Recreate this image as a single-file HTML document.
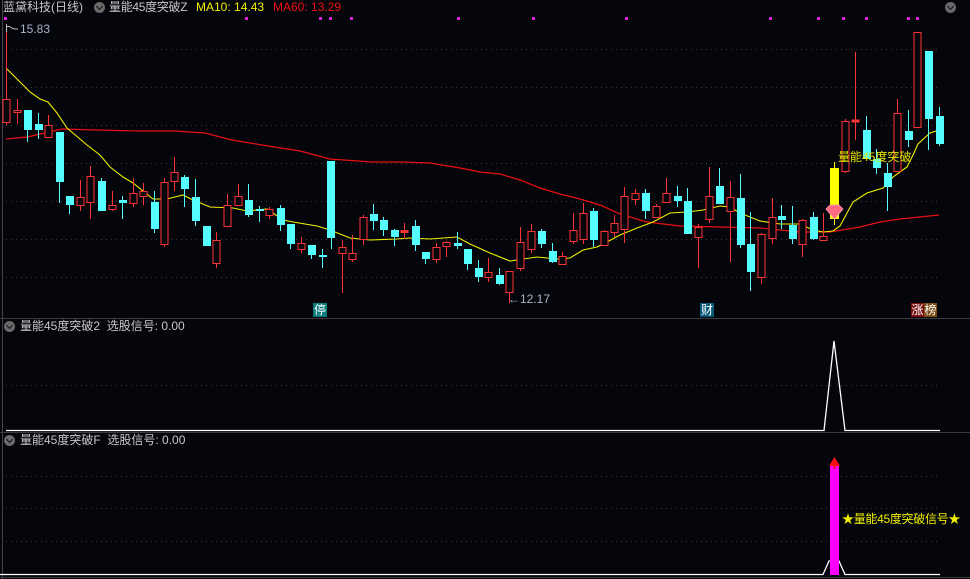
<!DOCTYPE html>
<html><head><meta charset="utf-8"><style>
html,body{margin:0;padding:0;background:#05050c;}
body{width:970px;height:579px;overflow:hidden;position:relative;font-family:"Liberation Sans","Noto Sans CJK SC",sans-serif;}
.t{position:absolute;font-size:12px;white-space:nowrap;line-height:14px;}
.ic{position:absolute;width:11px;height:11px;border-radius:50%;background:#6a6a6a;}
.ic:after{content:"";position:absolute;left:3px;top:2px;width:4px;height:4px;border-right:1.5px solid #111;border-bottom:1.5px solid #111;transform:rotate(45deg);}
</style></head><body>
<svg width="970" height="579" style="position:absolute;left:0;top:0" xmlns="http://www.w3.org/2000/svg">
<g stroke="#3c3c46" stroke-width="1" stroke-dasharray="1,4">
<path d="M6 49.5H940M6 87.5H940M6 125.5H940M6 163.5H940M6 201.5H940M6 239.5H940M6 277.5H940M6 385.5H940M6 476.5H940M6 508.5H940M6 541.5H940"/>
</g>
<path d="M2.5 0V579" stroke="#44444c"/>
<path d="M0 318.5H970M0 432.5H970M0 577.5H970" stroke="#3a3a40"/>
<g fill="#e020e0">
<rect x="4" y="17" width="3" height="3"/><rect x="245" y="17" width="3" height="3"/><rect x="319" y="17" width="3" height="3"/><rect x="329" y="17" width="3" height="3"/><rect x="350" y="17" width="3" height="3"/><rect x="457" y="17" width="3" height="3"/><rect x="532" y="17" width="3" height="3"/><rect x="625" y="17" width="3" height="3"/><rect x="769" y="17" width="3" height="3"/><rect x="817" y="17" width="3" height="3"/><rect x="842" y="17" width="3" height="3"/><rect x="865" y="17" width="3" height="3"/><rect x="907" y="17" width="3" height="3"/><rect x="916" y="17" width="3" height="3"/>
</g>
<polyline fill="none" stroke="#e81010" stroke-width="1.2" points="6,139 27,137 62,129 96,130 140,131 175,131 205,133 232,140 262,145 300,151 330,159 372,162 400,162 430,163 460,168 480,172 500,174 520,180 540,188 560,194 580,199 600,205 620,214 647,222 680,226 720,227 760,228 800,232 830,232 860,227 880,222 900,219 939,215"/>
<polyline fill="none" stroke="#f0f000" stroke-width="1.1" points="6,68 20,82 30,92 40,99 48,102 57,113 67,128 87,145 100,155 110,167 123,177 133,183 153,199 167,199 183,195 193,200 210,207 233,208 247,211 267,209 283,220 293,222 317,226 330,230 350,238 370,240 397,239 410,238 430,239 457,237 470,244 490,253 510,261 523,259 537,257 557,259 570,258 583,250 597,247 607,242 620,235 637,228 653,222 670,213 687,212 703,210 720,206 730,207 740,213 760,221 780,224 800,224 813,230 823,232 833,231 840,226 853,202 867,193 883,188 893,177 907,167 913,155 918,144 930,133 939,130"/>
<path stroke="#ff3333" fill="none" d="M6.5 27V125M17.5 99V124M48.5 115V137M80.5 180V211M90.5 166V219M112.5 191V211M133.5 178V207M143.5 183V205M164.5 178V247M174.5 157V191M216.5 232V268M227.5 194V226M238.5 184V205M269.5 207V219M301.5 237V253M342.5 240V293M352.5 235V262M363.5 215V245M404.5 223V239M436.5 243V263M446.5 241V257M488.5 258V282M509.5 271V303M520.5 227V271M531.5 224V253M562.5 252V264M573.5 213V244M583.5 203V244M604.5 230V245M614.5 215V237M624.5 187V243M635.5 189V205M656.5 204V217M666.5 178V202M698.5 224V268M709.5 167V223M730.5 181V262M761.5 233V284M772.5 198V244M802.5 219V257M823.5 213V240M845.5 119V173M855.5 52V140M897.5 99V171M917.5 32V127"/>
<path stroke="#55ffff" fill="none" d="M27.5 110V142M38.5 113V139M59.5 132V203M69.5 196V214M101.5 178V211M122.5 196V219M154.5 191V233M184.5 175V207M195.5 179V226M248.5 184V217M259.5 206V222M280.5 205V231M290.5 224V249M311.5 245V259M322.5 249V268M331.5 161V249M373.5 204V230M383.5 217V236M394.5 229V246M415.5 220V251M425.5 252V264M457.5 232V249M467.5 249V270M478.5 260V282M499.5 268V285M541.5 229V248M552.5 243V263M593.5 208V247M645.5 189V219M677.5 186V207M687.5 188V234M719.5 168V204M740.5 174V248M750.5 212V291M781.5 205V229M792.5 206V244M813.5 212V240M866.5 116V159M876.5 149V174M887.5 163V211M908.5 110V147M928.5 51V150M939.5 107V146"/>
<g fill="#05050c" stroke="#ff3333">
<rect x="3" y="99.5" width="7" height="23"/><rect x="14" y="110.5" width="7" height="2"/><rect x="45" y="125.5" width="7" height="12"/><rect x="77" y="197.5" width="7" height="8"/><rect x="87" y="176.5" width="7" height="26"/><rect x="109" y="205.5" width="7" height="4"/><rect x="130" y="193.5" width="7" height="10"/><rect x="140" y="191.5" width="7" height="5"/><rect x="161" y="182.5" width="7" height="62"/><rect x="171" y="172.5" width="7" height="9"/><rect x="213" y="240.5" width="7" height="23"/><rect x="224" y="205.5" width="7" height="21"/><rect x="235" y="196.5" width="7" height="9"/><rect x="266" y="209.5" width="7" height="6"/><rect x="298" y="243.5" width="7" height="6"/><rect x="339" y="247.5" width="7" height="6"/><rect x="349" y="253.5" width="7" height="6"/><rect x="360" y="217.5" width="7" height="22"/><rect x="401" y="230.5" width="7" height="2" fill="#ff3333"/><rect x="433" y="247.5" width="7" height="12"/><rect x="443" y="242.5" width="7" height="4"/><rect x="485" y="272.5" width="7" height="5"/><rect x="506" y="271.5" width="7" height="21"/><rect x="517" y="242.5" width="7" height="26"/><rect x="528" y="231.5" width="7" height="18"/><rect x="559" y="256.5" width="7" height="8"/><rect x="570" y="230.5" width="7" height="11"/><rect x="580" y="213.5" width="7" height="26"/><rect x="601" y="231.5" width="7" height="14"/><rect x="611" y="223.5" width="7" height="9"/><rect x="621" y="196.5" width="7" height="33"/><rect x="632" y="193.5" width="7" height="6"/><rect x="653" y="206.5" width="7" height="11"/><rect x="663" y="193.5" width="7" height="9"/><rect x="695" y="227.5" width="7" height="10"/><rect x="706" y="196.5" width="7" height="23"/><rect x="727" y="197.5" width="7" height="14"/><rect x="758" y="234.5" width="7" height="43"/><rect x="769" y="217.5" width="7" height="21"/><rect x="799" y="220.5" width="7" height="24"/><rect x="820" y="236.5" width="7" height="4"/><rect x="842" y="121.5" width="7" height="50"/><rect x="852" y="120" width="7" height="2" fill="#ff3333"/><rect x="894" y="113.5" width="7" height="58"/><rect x="914" y="32.5" width="7" height="95"/>
</g>
<g fill="#55ffff">
<rect x="24" y="110" width="8" height="20"/><rect x="35" y="124" width="8" height="6"/><rect x="56" y="132" width="8" height="50"/><rect x="66" y="196" width="8" height="9"/><rect x="98" y="181" width="8" height="30"/><rect x="119" y="200" width="8" height="3"/><rect x="151" y="202" width="8" height="27"/><rect x="181" y="177" width="8" height="12"/><rect x="192" y="197" width="8" height="24"/><rect x="203" y="226" width="8" height="20"/><rect x="245" y="200" width="8" height="15"/><rect x="256" y="209" width="8" height="2"/><rect x="277" y="208" width="8" height="17"/><rect x="287" y="224" width="8" height="20"/><rect x="308" y="245" width="8" height="10"/><rect x="319" y="255" width="8" height="2"/><rect x="327" y="161" width="8" height="77"/><rect x="370" y="214" width="8" height="7"/><rect x="380" y="220" width="8" height="10"/><rect x="391" y="230" width="8" height="7"/><rect x="412" y="226" width="8" height="19"/><rect x="422" y="252" width="8" height="7"/><rect x="454" y="243" width="8" height="3"/><rect x="464" y="249" width="8" height="15"/><rect x="475" y="268" width="8" height="9"/><rect x="496" y="275" width="8" height="9"/><rect x="538" y="231" width="8" height="13"/><rect x="549" y="251" width="8" height="11"/><rect x="590" y="211" width="8" height="29"/><rect x="642" y="193" width="8" height="18"/><rect x="674" y="196" width="8" height="5"/><rect x="684" y="201" width="8" height="33"/><rect x="716" y="186" width="8" height="18"/><rect x="737" y="198" width="8" height="47"/><rect x="747" y="244" width="8" height="28"/><rect x="778" y="216" width="8" height="4"/><rect x="789" y="225" width="8" height="14"/><rect x="810" y="217" width="8" height="22"/><rect x="863" y="130" width="8" height="29"/><rect x="873" y="159" width="8" height="9"/><rect x="884" y="173" width="8" height="14"/><rect x="905" y="131" width="8" height="9"/><rect x="925" y="51" width="8" height="68"/><rect x="936" y="116" width="8" height="28"/>
</g>
<path d="M834.5 162V225" stroke="#ffff00"/>
<rect x="830" y="168" width="9" height="51" fill="#ffff00"/>
<polygon points="826,209 830,205 839,205 843,209 834.5,219" fill="#ff6a80" stroke="#ff9aa8" stroke-width="0.8"/>
<path d="M6.5 24V32M7 26.5H10M10 27L14 29H18" stroke="#bbbbbb" fill="none"/>
<polyline fill="none" stroke="#ffffff" stroke-width="1.3" points="6,430.5 824,430.5 834,341 845,430.5 940,430.5"/>
<polyline fill="none" stroke="#ffffff" stroke-width="1.3" points="0,574.5 823,574.5 829,561 839,561 845,574.5 940,574.5"/>
<rect x="830" y="465" width="9" height="110" fill="#ff00ff"/>
<polygon points="829,466 834.5,457 840,466" fill="#ff1010"/>
<rect x="833.5" y="463" width="2" height="6" fill="#ff1010"/>
</svg>
<div class="t" style="left:3px;top:0px;color:#c8c8c8">蓝黛科技(日线)</div>
<div class="ic" style="left:94px;top:2px"></div>
<div class="t" style="left:109px;top:0px;color:#c8c8c8;letter-spacing:-0.3px">量能45度突破Z</div>
<div class="t" style="left:196px;top:0px;color:#f0f000">MA10: 14.43</div>
<div class="t" style="left:273px;top:0px;color:#f01010">MA60: 13.29</div>
<div class="ic" style="left:945px;top:2px"></div>
<div class="t" style="left:20px;top:22px;color:#a8b4c8">15.83</div>
<div class="t" style="left:508px;top:292px;color:#a8b4c8">←12.17</div>
<div class="t" style="left:838px;top:150px;color:#e6e600">量能45度突破</div>
<div class="t" style="left:313px;top:303px;width:14px;height:14px;background:#0a7a7a;color:#fff;text-align:center">停</div>
<div class="t" style="left:700px;top:303px;width:14px;height:14px;background:#0a5a7a;color:#fff;text-align:center">财</div>
<div class="t" style="left:911px;top:303px;width:13px;height:14px;background:#7a1010;color:#fff;text-align:center">涨</div>
<div class="t" style="left:924px;top:303px;width:13px;height:14px;background:#7a4a10;color:#fff;text-align:center">榜</div>
<div class="ic" style="left:4px;top:321px"></div>
<div class="t" style="left:20px;top:319px;color:#c8c8c8">量能45度突破2&nbsp; 选股信号: 0.00</div>
<div class="ic" style="left:4px;top:435px"></div>
<div class="t" style="left:20px;top:433px;color:#c8c8c8">量能45度突破F&nbsp; 选股信号: 0.00</div>
<div class="t" style="left:842px;top:512px;color:#f0f000;letter-spacing:-0.3px">★量能45度突破信号★</div>
</body></html>
